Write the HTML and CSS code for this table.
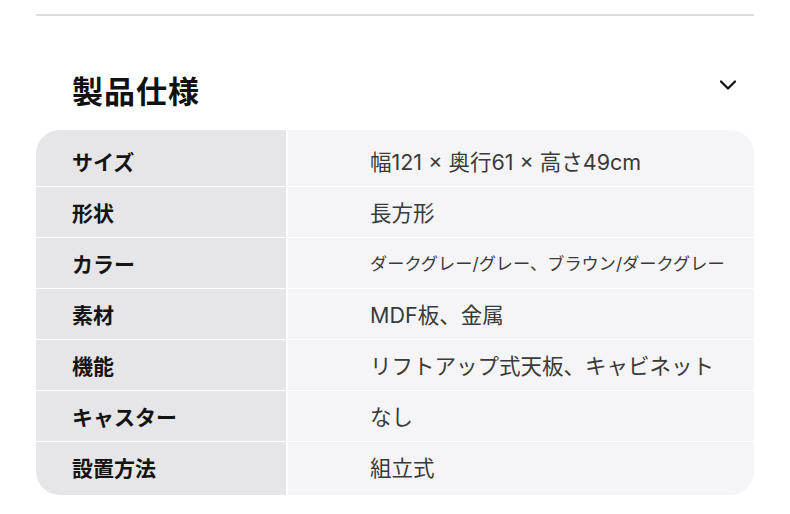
FILE: index.html
```html
<!DOCTYPE html>
<html lang="ja">
<head>
<meta charset="utf-8">
<link rel="stylesheet" href="styles.css">
</head>
<body>
<div class="wrap">
  <div class="rule"></div>
  <div class="head">
    <h2 class="title">製品仕様</h2>
    <svg class="chev" width="18" height="12" viewBox="0 0 18 12"><path d="M2 2.5 L9 9.5 L16 2.5" fill="none" stroke="#111" stroke-width="2.2" stroke-linecap="round" stroke-linejoin="round"/></svg>
  </div>
  <div class="spec">
    <div class="k first">サイズ</div><div class="v first">幅121 × 奥行61 × 高さ49cm</div>
    <div class="k">形状</div><div class="v">長方形</div>
    <div class="k">カラー</div><div class="v small">ダークグレー/グレー、ブラウン/ダークグレー</div>
    <div class="k">素材</div><div class="v">MDF板、金属</div>
    <div class="k">機能</div><div class="v">リフトアップ式天板、キャビネット</div>
    <div class="k">キャスター</div><div class="v">なし</div>
    <div class="k last">設置方法</div><div class="v last">組立式</div>
  </div>
</div>
</body>
</html>
```
FILE: styles.css
```css
html, body { margin: 0; padding: 0; background: #fff; }
body { font-family: "Noto Sans CJK JP", "Noto Sans", sans-serif; }
.wrap { padding: 14px 36px 0; }
.rule { height: 2px; background: #dcdcdc; }
.head { display: flex; justify-content: space-between; align-items: flex-start; padding: 54px 17px 20px 36px; }
.title { margin: 0; font-size: 31px; line-height: 40px; font-weight: 700; color: #111; letter-spacing: 1px; }
.chev { margin-top: 9px; }
.spec { display: grid; grid-template-columns: 250px 1fr; column-gap: 2px; row-gap: 1px; background: #fff; border-radius: 24px; overflow: hidden; }
.k, .v { height: 50px; display: flex; align-items: center; }
.k { background: #e6e6e8; padding-left: 36px; font-size: 21px; font-weight: 700; color: #141414; }
.v { background: #f5f5f7; padding-left: 82px; font-family: Inter, "Noto Sans CJK JP", sans-serif; font-size: 21.5px; font-weight: 400; color: #3a3a3a; padding-bottom: 2px; box-sizing: content-box; height: 48px; }
.v.small { font-size: 17.2px; }
.v.first { padding-top: 6px; height: 48px; }
.k.first { padding-top: 6px; box-sizing: content-box; }
.k.last { padding-bottom: 3px; box-sizing: content-box; }
.v.last { padding-bottom: 5px; }
```
